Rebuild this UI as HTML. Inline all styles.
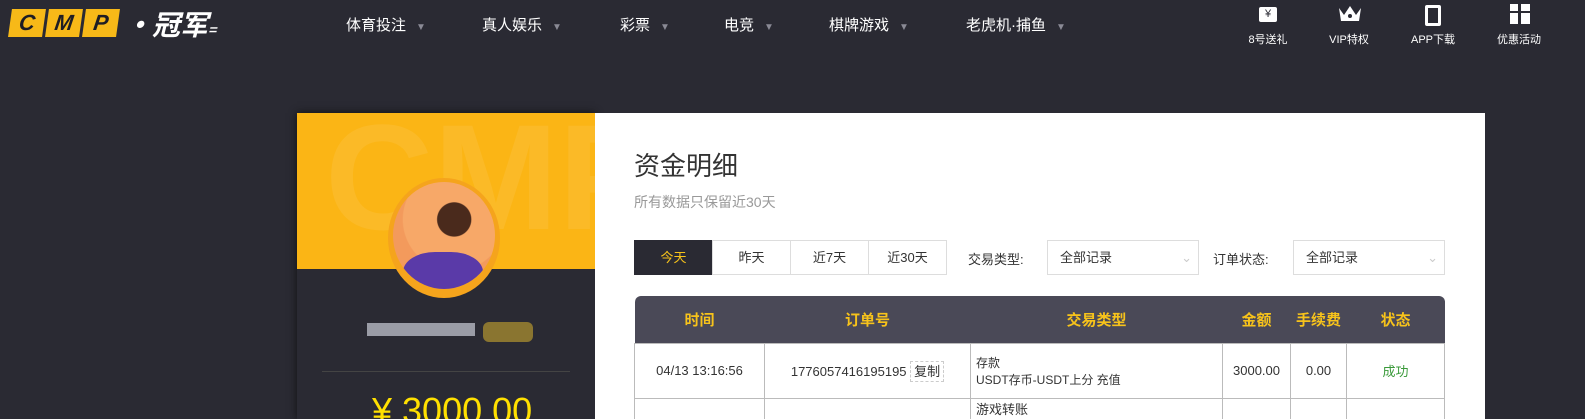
<!DOCTYPE html><html><head><meta charset="utf-8"><style>
*{margin:0;padding:0;box-sizing:border-box}
html,body{width:1585px;height:419px;overflow:hidden}
body{background:#2a2a33;font-family:"Liberation Sans","Noto Sans CJK SC",sans-serif;position:relative}
.a{position:absolute}
.nav{color:#fff;font-size:15px;top:14px}
.nav i{font-style:normal;color:#8a8a95;font-size:10px;margin-left:10px}
.ic{color:#fff;font-size:11px;top:31px;text-align:center;width:70px}
.logo b{display:inline-block;width:34px;height:28px;background:#f7b918;color:#1e1e24;font:italic 900 22px/28px "Liberation Sans";text-align:center;margin-right:3px;transform:skewX(-8deg)}
table{border-collapse:collapse;font-size:13px;color:#333}
td{border:1px solid #bbb;text-align:center;height:55px}
th{background:#4a4957;color:#f7c31b;font-size:15px;height:47px;font-weight:bold}
.btn{top:240px;height:35px;border:1px solid #ddd;font-size:13px;line-height:33px;text-align:center;color:#333}
.sel{top:240px;height:35px;border:1px solid #ddd;font-size:13px;line-height:33px;padding-left:12px;color:#333}
</style></head><body>
<div class="a logo" style="left:10px;top:9px"><b>C</b><b>M</b><b>P</b></div>
<div class="a" style="left:124px;top:4px;color:#fff;font:italic bold 28px 'Noto Sans CJK SC',sans-serif">·冠军<span style="font-size:14px">=</span></div>
<div class="a nav" style="left:346px">体育投注<i>▼</i></div>
<div class="a nav" style="left:482px">真人娱乐<i>▼</i></div>
<div class="a nav" style="left:620px">彩票<i>▼</i></div>
<div class="a nav" style="left:724px">电竞<i>▼</i></div>
<div class="a nav" style="left:829px">棋牌游戏<i>▼</i></div>
<div class="a nav" style="left:966px">老虎机·捕鱼<i>▼</i></div>
<div class="a" style="left:1259px;top:7px;width:18px;height:15px;background:#fff;border-radius:2px;font-size:11px;text-align:center;line-height:15px;color:#2a2a33">¥</div>
<svg class="a" style="left:1337px;top:3px" width="26" height="20"><path d="M2 5 L7 12 L13 3 L19 12 L24 5 L22 18 H4Z" fill="#fff"/><circle cx="13" cy="13" r="2" fill="#2a2a33"/></svg>
<div class="a" style="left:1425px;top:5px;width:16px;height:21px;border:3px solid #fff;border-radius:2px"></div>
<div class="a" style="left:1510px;top:4px;width:20px;height:20px;background:#fff;border-top:6px solid #fff"><div style="position:absolute;left:8px;top:-6px;width:3px;height:20px;background:#2a2a33"></div><div style="position:absolute;left:0;top:1px;width:20px;height:2px;background:#2a2a33"></div></div>
<div class="a ic" style="left:1233px">8号送礼</div>
<div class="a ic" style="left:1314px">VIP特权</div>
<div class="a ic" style="left:1398px">APP下载</div>
<div class="a ic" style="left:1484px">优惠活动</div>

<div class="a" style="left:297px;top:113px;width:298px;height:306px;background:#2a2a33;box-shadow:0 0 8px #111"></div>
<div class="a" style="left:297px;top:113px;width:298px;height:156px;background:#fbb515;overflow:hidden"><div style="position:absolute;left:28px;top:-22px;font:bold 150px 'Liberation Sans';color:rgba(255,255,255,.08)">CMP</div></div>
<div class="a" style="left:388px;top:178px;width:112px;height:120px;border-radius:50%;background:#f5a41c"></div>
<div class="a" style="left:393px;top:182px;width:102px;height:107px;border-radius:50%;background:radial-gradient(circle at 60% 35%,#4a2a1c 0 18%,#f7a868 19% 55%,#f39a5c 56%);overflow:hidden"><div style="position:absolute;left:10px;top:70px;width:80px;height:50px;background:#5a3aa8;border-radius:40% 40% 0 0"></div></div>
<div class="a" style="left:367px;top:323px;width:108px;height:13px;background:#9a9ca6"></div>
<div class="a" style="left:483px;top:322px;width:50px;height:20px;background:#8a7530;border-radius:6px"></div>
<div class="a" style="left:322px;top:371px;width:248px;height:1px;background:#444"></div>
<div class="a" style="left:372px;top:390px;color:#ffe000;font-size:36px">¥ 3000.00</div>

<div class="a" style="left:595px;top:113px;width:890px;height:306px;background:#fff;overflow:hidden">
<div class="a" style="left:39px;top:33px;font-size:26px;color:#333">资金明细</div>
<div class="a" style="left:39px;top:79px;font-size:14px;color:#999">所有数据只保留近30天</div>
<table class="a" style="left:39px;top:183px;width:811px">
<tr><th style="width:130px;border-radius:6px 0 0 0">时间</th><th style="width:206px">订单号</th><th style="width:252px">交易类型</th><th style="width:68px">金额</th><th style="width:56px">手续费</th><th style="border-radius:0 6px 0 0">状态</th></tr>
<tr><td>04/13 13:16:56</td><td>1776057416195195 <span style="border:1px dashed #ccc;padding:2px 3px">复制</span></td><td style="text-align:left;padding-left:5px;font-size:12px">存款<br>USDT存币-USDT上分 充值</td><td>3000.00</td><td>0.00</td><td style="color:#3a9a3a">成功</td></tr>
<tr><td></td><td></td><td style="text-align:left;padding-left:5px;vertical-align:top">游戏转账</td><td></td><td></td><td></td></tr>
</table>
</div>
<div class="a btn" style="left:634px;width:79px;background:#2a2a33;color:#f7c31b;border-color:#2a2a33">今天</div>
<div class="a btn" style="left:712px;width:79px">昨天</div>
<div class="a btn" style="left:790px;width:79px">近7天</div>
<div class="a btn" style="left:868px;width:79px">近30天</div>
<div class="a" style="left:968px;top:249px;font-size:13px;color:#333">交易类型:</div>
<div class="a sel" style="left:1047px;width:152px">全部记录<span style="position:absolute;right:6px;color:#ccc">⌄</span></div>
<div class="a" style="left:1213px;top:249px;font-size:13px;color:#333">订单状态:</div>
<div class="a sel" style="left:1293px;width:152px">全部记录<span style="position:absolute;right:6px;color:#ccc">⌄</span></div>
</body></html>
